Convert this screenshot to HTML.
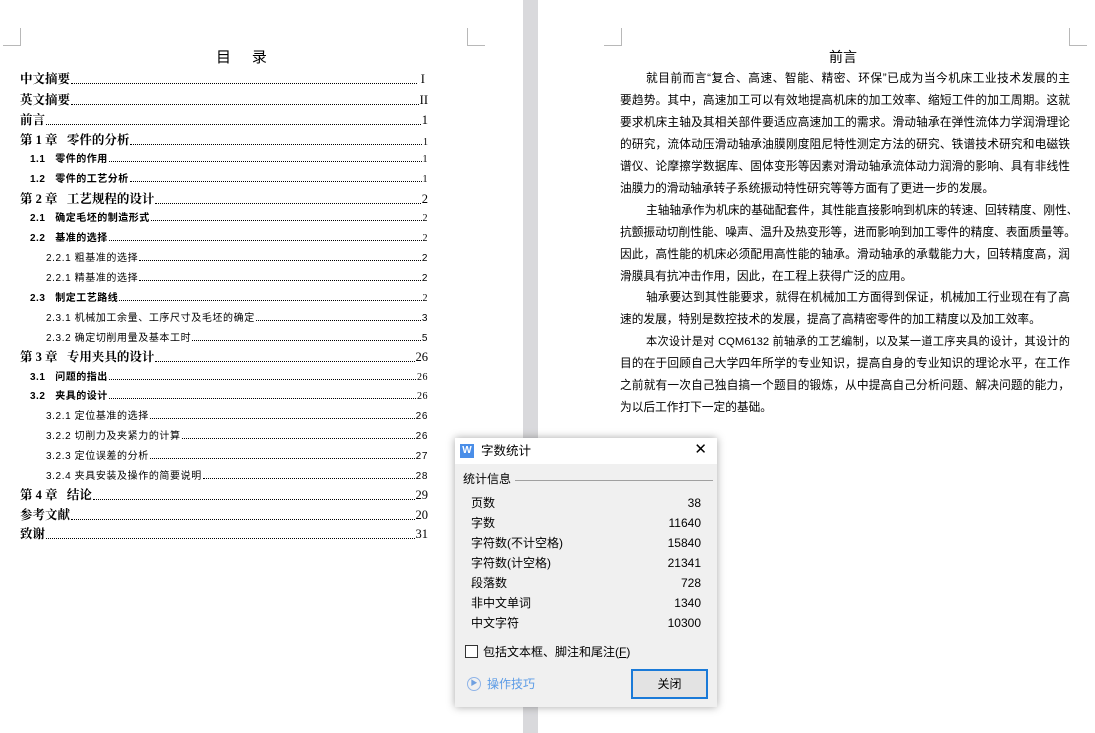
<!DOCTYPE html>
<html><head><meta charset="utf-8"><style>
*{margin:0;padding:0;box-sizing:border-box}
body{width:1095px;height:733px;overflow:hidden;background:#fff;position:relative;font-family:"Liberation Serif","Noto Serif CJK SC","Noto Sans CJK SC",serif;color:#000}
.gut{position:absolute;left:523px;top:0;width:15px;height:733px;background:#d9d9dc}
.m{position:absolute;border-color:#b8b8b8;border-style:solid;border-width:0}
.toc{position:absolute;left:20px;width:408px}
.r{position:absolute;display:flex;align-items:flex-end;white-space:nowrap}
.r .d{flex:1;border-bottom:1px dotted #000;margin:0 1px 3px 1px;height:1px}
.l1{font-size:12.5px;font-weight:bold;left:0;right:0}
.l2{font-size:10px;font-weight:bold;left:10px;right:0;font-family:"Liberation Sans","Noto Sans CJK SC",sans-serif;letter-spacing:.5px}
.l3{font-size:10px;left:26px;right:0;font-family:"Liberation Sans","Noto Sans CJK SC",sans-serif;letter-spacing:.6px}
.n{font-weight:normal;font-family:"Liberation Serif",serif}
.p{position:absolute;left:620px;width:450px;font-size:11.7px;text-align:justify;text-align-last:justify;white-space:nowrap;overflow:hidden;font-family:"Liberation Sans","Noto Sans CJK SC",sans-serif;line-height:16px}
.ind{left:646px;width:424px}
.last{text-align-last:left}
.dlg{position:absolute;left:455px;top:438px;width:262px;height:269px;background:#f0f0f0;box-shadow:0 0 8px rgba(0,0,0,.35);font-family:"Liberation Sans","Noto Sans CJK SC",sans-serif;font-size:12px;color:#000}
.tb{height:26px;background:#fff;position:relative}
.row{position:absolute;left:16px;width:230px;display:flex;justify-content:space-between;align-items:baseline;line-height:16px}
</style></head><body>
<div class="gut"></div>
<div class="m" style="left:3px;top:28px;width:18px;height:18px;border-right-width:1px;border-bottom-width:1px"></div>
<div class="m" style="left:467px;top:28px;width:18px;height:18px;border-left-width:1px;border-bottom-width:1px"></div>
<div class="m" style="left:604px;top:28px;width:18px;height:18px;border-right-width:1px;border-bottom-width:1px"></div>
<div class="m" style="left:1069px;top:28px;width:18px;height:18px;border-left-width:1px;border-bottom-width:1px"></div>

<div style="position:absolute;left:216px;top:46px;font-size:15px;font-family:'Liberation Sans','Noto Sans CJK SC',sans-serif">目&nbsp;&nbsp;&nbsp;&nbsp;&nbsp;录</div>
<div class="toc">
<div class="r l1" style="top:69px"><span>中文摘要</span><span class="d"></span><span class="n">&nbsp;I&nbsp;</span></div>
<div class="r l1" style="top:90px"><span>英文摘要</span><span class="d"></span><span class="n">II</span></div>
<div class="r l1" style="top:110px"><span>前言</span><span class="d"></span><span class="n">1</span></div>
<div class="r l1" style="top:130px"><span>第 1 章&nbsp;&nbsp;&nbsp;零件的分析</span><span class="d"></span><span class="n" style="font-size:10px">1</span></div>
<div class="r l2" style="top:150px"><span>1.1&nbsp;&nbsp;&nbsp;零件的作用</span><span class="d"></span><span class="n">1</span></div>
<div class="r l2" style="top:170px"><span>1.2&nbsp;&nbsp;&nbsp;零件的工艺分析</span><span class="d"></span><span class="n">1</span></div>
<div class="r l1" style="top:189px"><span>第 2 章&nbsp;&nbsp;&nbsp;工艺规程的设计</span><span class="d"></span><span class="n">2</span></div>
<div class="r l2" style="top:209px"><span>2.1&nbsp;&nbsp;&nbsp;确定毛坯的制造形式</span><span class="d"></span><span class="n">2</span></div>
<div class="r l2" style="top:229px"><span>2.2&nbsp;&nbsp;&nbsp;基准的选择</span><span class="d"></span><span class="n">2</span></div>
<div class="r l3" style="top:249px"><span>2.2.1 粗基准的选择</span><span class="d"></span><span>2</span></div>
<div class="r l3" style="top:269px"><span>2.2.1 精基准的选择</span><span class="d"></span><span>2</span></div>
<div class="r l2" style="top:289px"><span>2.3&nbsp;&nbsp;&nbsp;制定工艺路线</span><span class="d"></span><span class="n">2</span></div>
<div class="r l3" style="top:309px"><span>2.3.1 机械加工余量、工序尺寸及毛坯的确定</span><span class="d"></span><span>3</span></div>
<div class="r l3" style="top:329px"><span>2.3.2 确定切削用量及基本工时</span><span class="d"></span><span>5</span></div>
<div class="r l1" style="top:347px"><span>第 3 章&nbsp;&nbsp;&nbsp;专用夹具的设计</span><span class="d"></span><span class="n">26</span></div>
<div class="r l2" style="top:368px"><span>3.1&nbsp;&nbsp;&nbsp;问题的指出</span><span class="d"></span><span class="n">26</span></div>
<div class="r l2" style="top:387px"><span>3.2&nbsp;&nbsp;&nbsp;夹具的设计</span><span class="d"></span><span class="n">26</span></div>
<div class="r l3" style="top:407px"><span>3.2.1 定位基准的选择</span><span class="d"></span><span>26</span></div>
<div class="r l3" style="top:427px"><span>3.2.2 切削力及夹紧力的计算</span><span class="d"></span><span>26</span></div>
<div class="r l3" style="top:447px"><span>3.2.3 定位误差的分析</span><span class="d"></span><span>27</span></div>
<div class="r l3" style="top:467px"><span>3.2.4 夹具安装及操作的简要说明</span><span class="d"></span><span>28</span></div>
<div class="r l1" style="top:485px"><span>第 4 章&nbsp;&nbsp;&nbsp;结论</span><span class="d"></span><span class="n">29</span></div>
<div class="r l1" style="top:505px"><span>参考文献</span><span class="d"></span><span class="n">20</span></div>
<div class="r l1" style="top:524px"><span>致谢</span><span class="d"></span><span class="n">31</span></div>
</div>

<div style="position:absolute;left:829px;top:47px;font-size:14px;font-family:'Liberation Sans','Noto Sans CJK SC',sans-serif">前言</div>
<div class="p ind" style="top:71px">就目前而言“复合、高速、智能、精密、环保”已成为当今机床工业技术发展的主</div>
<div class="p" style="top:93px">要趋势。其中，高速加工可以有效地提高机床的加工效率、缩短工件的加工周期。这就</div>
<div class="p" style="top:115px">要求机床主轴及其相关部件要适应高速加工的需求。滑动轴承在弹性流体力学润滑理论</div>
<div class="p" style="top:137px">的研究，流体动压滑动轴承油膜刚度阻尼特性测定方法的研究、铁谱技术研究和电磁铁</div>
<div class="p" style="top:159px">谱仪、论摩擦学数据库、固体变形等因素对滑动轴承流体动力润滑的影响、具有非线性</div>
<div class="p last" style="top:181px">油膜力的滑动轴承转子系统振动特性研究等等方面有了更进一步的发展。</div>
<div class="p ind" style="top:203px">主轴轴承作为机床的基础配套件，其性能直接影响到机床的转速、回转精度、刚性、</div>
<div class="p" style="top:225px">抗颤振动切削性能、噪声、温升及热变形等，进而影响到加工零件的精度、表面质量等。</div>
<div class="p" style="top:247px">因此，高性能的机床必须配用高性能的轴承。滑动轴承的承载能力大，回转精度高，润</div>
<div class="p last" style="top:269px">滑膜具有抗冲击作用，因此，在工程上获得广泛的应用。</div>
<div class="p ind" style="top:290px">轴承要达到其性能要求，就得在机械加工方面得到保证，机械加工行业现在有了高</div>
<div class="p last" style="top:312px">速的发展，特别是数控技术的发展，提高了高精密零件的加工精度以及加工效率。</div>
<div class="p ind" style="top:334px;font-size:11.2px">本次设计是对 CQM6132 前轴承的工艺编制，以及某一道工序夹具的设计，其设计的</div>
<div class="p" style="top:356px">目的在于回顾自己大学四年所学的专业知识，提高自身的专业知识的理论水平，在工作</div>
<div class="p" style="top:378px">之前就有一次自己独自搞一个题目的锻炼，从中提高自己分析问题、解决问题的能力，</div>
<div class="p last" style="top:400px">为以后工作打下一定的基础。</div>

<div class="dlg">
<div class="tb">
<div style="position:absolute;left:5px;top:6px;width:14px;height:14px;background:#4a8ee8;color:#fff;font-size:10px;line-height:14px;text-align:center;font-weight:bold">W</div>
<div style="position:absolute;left:26px;top:5px;font-size:12.5px;line-height:16px">字数统计</div>
<div style="position:absolute;right:10px;top:4px;font-size:15px;line-height:16px">✕</div>
</div>
<div style="position:absolute;left:8px;top:33px;line-height:16px">统计信息</div>
<div style="position:absolute;left:60px;top:42px;width:198px;height:1px;background:#a0a0a0"></div>
<div class="row" style="top:57px"><span>页数</span><span>38</span></div>
<div class="row" style="top:77px"><span>字数</span><span>11640</span></div>
<div class="row" style="top:97px"><span>字符数(不计空格)</span><span>15840</span></div>
<div class="row" style="top:117px"><span>字符数(计空格)</span><span>21341</span></div>
<div class="row" style="top:137px"><span>段落数</span><span>728</span></div>
<div class="row" style="top:157px"><span>非中文单词</span><span>1340</span></div>
<div class="row" style="top:177px"><span>中文字符</span><span>10300</span></div>
<div style="position:absolute;left:10px;top:207px;width:13px;height:13px;border:1px solid #333;background:#fff"></div>
<div style="position:absolute;left:28px;top:206px;line-height:16px">包括文本框、脚注和尾注(<u>F</u>)</div>
<div style="position:absolute;left:12px;top:239px;width:14px;height:14px;border:1px solid #8fb4e8;border-radius:50%;color:#6fa0e0;font-size:7px;line-height:12px;text-align:center">▶</div>
<div style="position:absolute;left:32px;top:238px;color:#5b9be6;line-height:16px">操作技巧</div>
<div style="position:absolute;left:176px;top:231px;width:77px;height:30px;border:2px solid #1a7ad8;background:#e3e3e3;text-align:center;line-height:26px">关闭</div>
</div>
</body></html>
